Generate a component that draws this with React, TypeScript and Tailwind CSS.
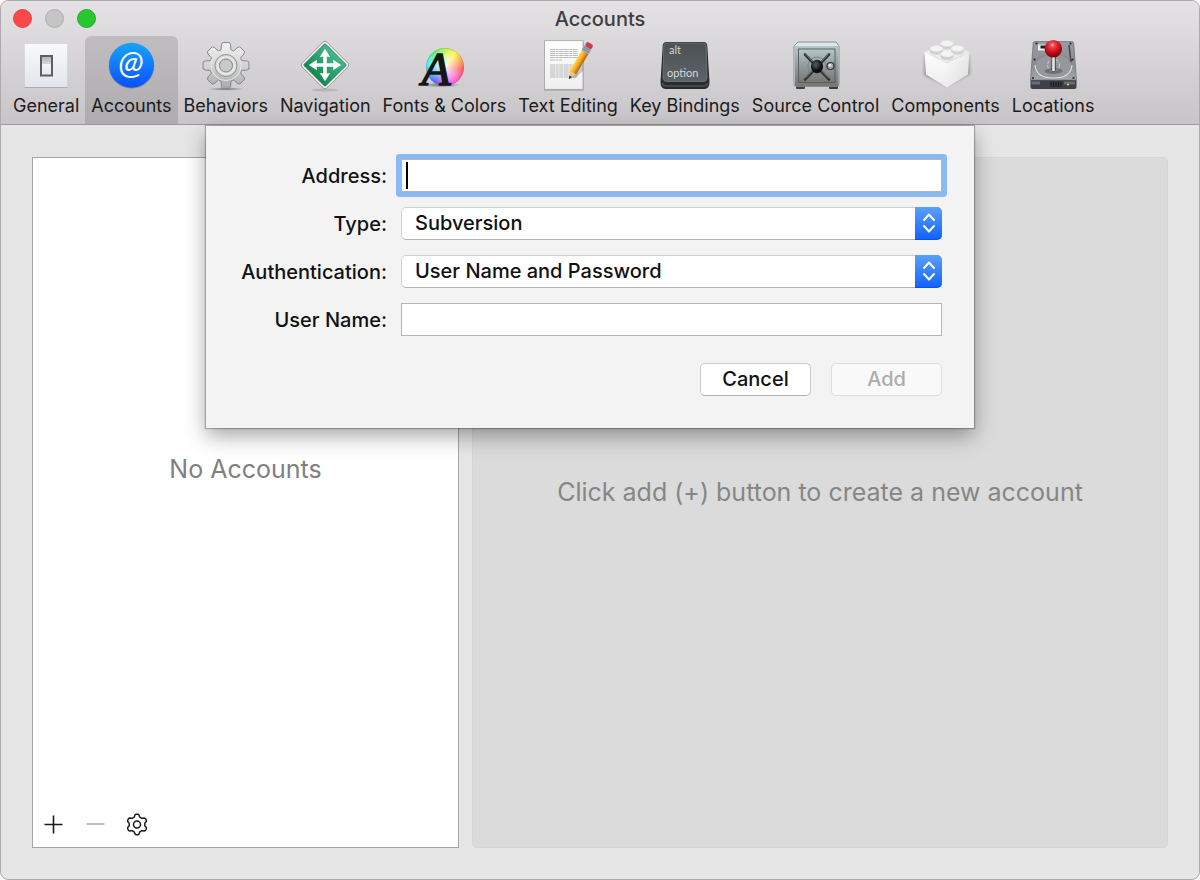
import { useState } from 'react';
import type { ReactNode } from 'react';
import clsx from 'clsx';

const polar = (cx: number, cy: number, r: number, a: number) =>
  `${(cx + r * Math.cos(a)).toFixed(2)} ${(cy + r * Math.sin(a)).toFixed(2)}`;

// Straight-sided cog with eight teeth, first tooth pointing up
const cogPath = (cx: number, cy: number, outer: number, inner: number) => {
  const points: string[] = [];
  for (let i = 0; i < 8; i++) {
    const a = (i * Math.PI) / 4 - Math.PI / 2;
    points.push(
      polar(cx, cy, inner, a - 0.3),
      polar(cx, cy, outer - 2, a - 0.22),
      polar(cx, cy, outer, a - 0.15),
      polar(cx, cy, outer, a + 0.15),
      polar(cx, cy, outer - 2, a + 0.22),
      polar(cx, cy, inner, a + 0.3)
    );
  }
  return `M${points.join('L')}Z`;
};

// Soft six-lobed gear outline
const softGearPath = (cx: number, cy: number) => {
  const points: string[] = [];
  for (let i = 0; i < 90; i++) {
    const a = (i * Math.PI * 2) / 90 - Math.PI / 2;
    const lobe = Math.tanh(2 * Math.cos(6 * (a + Math.PI / 2)));
    points.push(polar(cx, cy, 9 + 1.3 * lobe, a));
  }
  return `M${points.join('L')}Z`;
};

const Icon = ({ children }: { children: ReactNode }) => (
  <svg
    viewBox="0 0 50 50"
    className="h-[50px] w-[50px] shrink-0 overflow-visible"
    aria-hidden="true"
  >
    {children}
  </svg>
);

const GeneralIcon = () => (
  <Icon>
    <defs>
      <linearGradient id="plate" x1="0" y1="0" x2="0" y2="1">
        <stop offset="0" stopColor="#f8f9fb" />
        <stop offset="1" stopColor="#e2e5ea" />
      </linearGradient>
      <linearGradient id="rocker" x1="0" y1="0" x2="0" y2="1">
        <stop offset="0" stopColor="#b4b6ba" />
        <stop offset="0.4" stopColor="#d6d8dc" />
        <stop offset="0.42" stopColor="#f3f4f6" />
        <stop offset="1" stopColor="#e6e8ec" />
      </linearGradient>
    </defs>
    <rect x="3.5" y="4.5" width="43" height="43.5" fill="#a9acb3" />
    <rect x="3.5" y="4" width="43" height="43" fill="url(#plate)" />
    <rect x="19" y="15" width="13" height="21.500" fill="#5c5e62" />
    <rect x="21" y="17" width="9" height="17.500" fill="url(#rocker)" />
  </Icon>
);

const AccountsIcon = () => (
  <Icon>
    <defs>
      <linearGradient id="at" x1="0" y1="0" x2="0" y2="1">
        <stop offset="0" stopColor="#17a4fb" />
        <stop offset="1" stopColor="#0a50fb" />
      </linearGradient>
    </defs>
    <circle cx="25.5" cy="26" r="22.8" fill="#000" opacity="0.2" />
    <circle cx="25.5" cy="25.2" r="22.5" fill="url(#at)" />
    <text
      x="25"
      y="34"
      textAnchor="middle"
      fontSize="33"
      fontStyle="italic"
      fontFamily="Lato, sans-serif"
      fill="#fff"
    >
      @
    </text>
  </Icon>
);

const BehaviorsIcon = () => (
  <Icon>
    <defs>
      <linearGradient id="cog" x1="0" y1="0" x2="0" y2="1">
        <stop offset="0" stopColor="#f4f4f4" />
        <stop offset="0.55" stopColor="#d0d0d0" />
        <stop offset="1" stopColor="#a8a9aa" />
      </linearGradient>
      <radialGradient id="ground">
        <stop offset="0" stopColor="#000" stopOpacity="0.45" />
        <stop offset="1" stopColor="#000" stopOpacity="0" />
      </radialGradient>
    </defs>
    <ellipse cx="25" cy="49" rx="18" ry="1.8" fill="url(#ground)" />
    <path
      d={cogPath(25, 25.5, 23.2, 16.5)}
      fill="url(#cog)"
      stroke="#85888c"
      strokeWidth="1"
      strokeLinejoin="round"
    />
    <circle cx="25" cy="25.5" r="15" fill="none" stroke="#e6e6e6" strokeWidth="1" />
    <circle cx="25" cy="25.5" r="11" fill="#d6d7d7" stroke="#909397" />
    <circle cx="25" cy="25.5" r="8.5" fill="none" stroke="#ededed" strokeWidth="1.5" />
    <circle cx="25" cy="25.5" r="6.5" fill="#c9c9ca" stroke="#85888c" />
  </Icon>
);

const NavigationIcon = () => (
  <Icon>
    <defs>
      <linearGradient id="sign" x1="0" y1="0" x2="0" y2="1">
        <stop offset="0" stopColor="#43b98a" />
        <stop offset="1" stopColor="#168754" />
      </linearGradient>
    </defs>
    <ellipse cx="25" cy="50" rx="13" ry="1.5" fill="#000" opacity="0.12" />
    <rect
      x="7.500"
      y="7.500"
      width="35"
      height="35"
      rx="2.5"
      transform="rotate(45 25 25)"
      fill="#f7f7f7"
      stroke="#858585"
      strokeWidth="0.8"
    />
    <rect
      x="9.800"
      y="9.800"
      width="30.400"
      height="30.400"
      rx="1"
      transform="rotate(45 25 25)"
      fill="url(#sign)"
      stroke="#147149"
      strokeWidth="0.8"
    />
    {[0, 90, 180, 270].map((angle) => (
      <path
        key={angle}
        d="M23.2 26V16.5L19.8 17L25 8.8L30.2 17L26.8 16.5V26Z"
        transform={`rotate(${angle} 25 25)`}
        fill="#fff"
      />
    ))}
  </Icon>
);

const FontsIcon = () => (
  <Icon>
    <ellipse cx="22" cy="45" rx="20" ry="2.500" fill="url(#ground)" />
    <foreignObject x="7" y="8" width="38" height="38">
      <div className="h-[38px] w-[38px] rounded-full bg-[radial-gradient(circle,#ffffffee_0%,#ffffff66_45%,#ffffff00_72%),conic-gradient(#b8f53c,#fff23c_10%,#ff9a3c_19%,#ff4a55_27%,#ff4fc0_38%,#e24bff_47%,#4a55f5_60%,#35a8ff_69%,#3cf0f0_78%,#45ef70_90%,#b8f53c)]" />
    </foreignObject>
    <circle cx="26" cy="27" r="18.6" fill="none" stroke="#777" strokeOpacity="0.3" />
    <text
      x="17"
      y="45"
      textAnchor="middle"
      fontSize="47"
      fontStyle="italic"
      fontFamily="'Liberation Serif', serif"
      fill="#161616"
      stroke="#161616"
      strokeWidth="1.600"
    >
      A
    </text>
  </Icon>
);

const TextEditingIcon = () => (
  <Icon>
    <defs>
      <linearGradient id="sheet" x1="0" y1="0" x2="0" y2="1">
        <stop offset="0" stopColor="#fdfdfd" />
        <stop offset="1" stopColor="#efefef" />
      </linearGradient>
      <linearGradient id="pencil" x1="0" y1="0" x2="1" y2="0">
        <stop offset="0" stopColor="#ffd95e" />
        <stop offset="0.45" stopColor="#f8ae2a" />
        <stop offset="1" stopColor="#b8610c" />
      </linearGradient>
    </defs>
    <rect x="1" y="1.2" width="39.5" height="49.3" fill="#77777a" opacity="0.7" />
    <rect x="1.5" y="0.7" width="38.5" height="48.6" fill="url(#sheet)" stroke="#a8a8aa" strokeWidth="0.8" />
    {[9.5, 11.5, 13.5, 15.5, 17.5, 20, 25, 27, 29, 31, 33, 35, 37].map((y) => (
      <path
        key={y}
        d={`M7 ${y}H${y === 20 ? 19 : 35}`}
        stroke="#b3b3b3"
        strokeWidth="0.9"
        strokeDasharray="5 .6 3 .6 4 .5"
      />
    ))}
    <path d="M26 39L40 24V31L32 38Z" fill="#000" opacity="0.18" />
    <g transform="rotate(31 26 39)">
      <path d="M22.500 31L26 39L29.500 31Z" fill="#edc48d" />
      <path d="M24.6 35.8L26 39.3L27.4 35.8Z" fill="#222" />
      <rect x="22.2" y="7" width="7.6" height="24.5" fill="url(#pencil)" />
      <rect x="22" y="2" width="8" height="6" fill="#9caab3" />
      <path d="M22 4H30M22 6H30" stroke="#6d7a84" strokeWidth="0.7" />
      <rect x="22.2" y="-2.5" width="7.6" height="5" rx="2" fill="#cc4148" />
    </g>
  </Icon>
);

const KeyIcon = () => (
  <Icon>
    <defs>
      <linearGradient id="cap" x1="0" y1="0" x2="0" y2="1">
        <stop offset="0" stopColor="#4c5154" />
        <stop offset="1" stopColor="#5d6366" />
      </linearGradient>
    </defs>
    <path
      d="M6.5 2H43.5Q47 2 47.3 6L49.5 42Q49.5 49 44.5 49H5.500Q.5 49 .5 42L2.700 6Q3 2 6.500 2Z"
      fill="#292c2e"
    />
    <path d="M2 43Q3 46 6 46H44Q47 46 48 43" fill="none" stroke="#4b4f52" strokeWidth="1.5" />
    <path
      d="M7 3H43Q46 3 46.200 6L47 38Q47 41.500 43.500 41.500H6.500Q3 41.500 3 38L3.800 6Q4 3 7 3Z"
      fill="url(#cap)"
      stroke="#73797c"
      strokeWidth="0.8"
    />
    <g fill="#d5d8d9" fontFamily="Lato, sans-serif" fontSize="11">
      <text x="9" y="14">alt</text>
      <text x="7" y="37">option</text>
    </g>
  </Icon>
);

const SafeIcon = () => (
  <Icon>
    <defs>
      <linearGradient id="safe" x1="0" y1="0" x2="0" y2="1">
        <stop offset="0" stopColor="#b4c7c9" />
        <stop offset="0.5" stopColor="#929b9c" />
        <stop offset="1" stopColor="#787673" />
      </linearGradient>
      <radialGradient id="knob" cx="0.4" cy="0.35">
        <stop offset="0" stopColor="#5b5c63" />
        <stop offset="1" stopColor="#0d0d0f" />
      </radialGradient>
    </defs>
    <rect x="5" y="45" width="9" height="4" rx="1" fill="#3e3e3e" />
    <rect x="38" y="45" width="9" height="4" rx="1" fill="#3e3e3e" />
    <path d="M7 2H45L48 6V44Q48 46.500 46 46.500H5Q3 46.500 3 44V6Z" fill="#dce7e8" stroke="#77797a" strokeWidth="0.8" />
    <rect x="4" y="6" width="43.500" height="40" rx="1" fill="url(#safe)" />
    <rect x="7.500" y="9" width="36.500" height="33.500" fill="url(#safe)" stroke="#565c5d" strokeWidth="0.900" />
    <circle cx="26" cy="26" r="9" fill="none" stroke="#7d8687" />
    <path
      d="M14 14.500L38 39.500M38 14.500L14 39.500"
      stroke="#303336"
      strokeWidth="2.600"
      strokeLinecap="round"
    />
    <path d="M14.500 14L38 38.500M37.500 14L14 38.500" stroke="#a5afb0" strokeWidth="0.6" />
    <ellipse cx="26" cy="26.500" rx="6" ry="6.700" fill="url(#knob)" />
    <circle cx="39.500" cy="26" r="3.500" fill="#9fa8a8" stroke="#2d3031" strokeWidth="1.200" />
    <circle cx="39" cy="25.300" r="1.300" fill="#eef2f2" />
  </Icon>
);

const BrickIcon = () => (
  <Icon>
    <defs>
      <linearGradient id="brickLeft" x1="0" y1="0" x2="0" y2="1">
        <stop offset="0" stopColor="#fefefe" />
        <stop offset="1" stopColor="#ececec" />
      </linearGradient>
      <linearGradient id="brickRight" x1="0" y1="0" x2="1" y2="1">
        <stop offset="0" stopColor="#fbfbfb" />
        <stop offset="1" stopColor="#dcdcdc" />
      </linearGradient>
      <filter id="soft">
        <feGaussianBlur stdDeviation="1.5" />
      </filter>
    </defs>
    <path d="M4 14L48 14L49 34L26 46L3 35Z" fill="#000" opacity="0.3" filter="url(#soft)" />
    <path d="M26 3L48.500 12L26 23L3.500 12Z" fill="#ececec" />
    <path d="M3.500 12L26 23V47.500L5 34.500Z" fill="url(#brickLeft)" />
    <path d="M48.500 12L26 23V47.500L47 34.500Z" fill="url(#brickRight)" />
    {[
      [26, 3.5],
      [15.5, 8.5],
      [36.5, 8.5],
      [26, 14]
    ].map(([x, y]) => (
      <g key={`${x}-${y}`}>
        <path
          d={`M${x - 6.5} ${y}V${y + 3}A6.5 3.200 0 0 0 ${x + 6.5} ${y + 3}V${y}Z`}
          fill="#d2d2d2"
        />
        <ellipse cx={x} cy={y} rx="6.500" ry="2.900" fill="#f3f3f3" />
      </g>
    ))}
  </Icon>
);

const LocationsIcon = () => (
  <Icon>
    <defs>
      <linearGradient id="drive" x1="0" y1="0" x2="0" y2="1">
        <stop offset="0" stopColor="#9b9ca0" />
        <stop offset="0.6" stopColor="#8b8c91" />
        <stop offset="1" stopColor="#a6a7ab" />
      </linearGradient>
      <radialGradient id="ball" cx="0.45" cy="0.28" r="0.75">
        <stop offset="0" stopColor="#ffc7c2" />
        <stop offset="0.18" stopColor="#f3414a" />
        <stop offset="0.55" stopColor="#c8101b" />
        <stop offset="1" stopColor="#66040a" />
      </radialGradient>
    </defs>
    <path d="M2.500 40H48.500V47Q48.500 49 46.500 49H4.500Q2.500 49 2.500 47Z" fill="#3f4149" />
    <path d="M7 1.500H43.500Q45.500 1.500 45.700 3L48.500 40H2.500L5.200 3Q5.500 1.500 7 1.500Z" fill="url(#drive)" stroke="#6c6d72" strokeWidth="0.7" />
    <ellipse cx="25.500" cy="26" rx="18.500" ry="12" fill="#96979c" stroke="#808186" strokeWidth="0.8" />
    <path d="M7 25Q8 38 25.500 38T44 25" fill="none" stroke="#e4e4e6" strokeWidth="1.100" />
    <rect x="10" y="4.500" width="9" height="6" fill="#eee" />
    <rect x="12.500" y="5.500" width="6" height="3" fill="#222" />
    <path d="M41 5L43 22" stroke="#4b4c50" strokeWidth="1.600" />
    {[
      [8.5, 3.5],
      [42.5, 3.5],
      [6.5, 19.500],
      [44.5, 19.500],
      [5, 38],
      [45.5, 38]
    ].map(([x, y]) => (
      <circle key={`${x}-${y}`} cx={x} cy={y} r="1.100" fill="#252629" />
    ))}
    <circle cx="25.500" cy="25" r="6" fill="none" stroke="#d2d3d6" strokeDasharray="3 2" />
    <ellipse cx="25.500" cy="31" rx="9" ry="3" fill="#000" opacity="0.25" />
    <rect x="23.300" y="16" width="4.600" height="15.500" rx="1.500" fill="#4d4e52" />
    <rect x="24.200" y="16" width="2.600" height="15" fill="#e8e8ea" />
    <circle cx="25.300" cy="8.800" r="8.800" fill="url(#ball)" />
    <path d="M3.500 43H12M36 43H47" stroke="#686b78" strokeWidth="3" />
    <path d="M23 41.500V47M25.500 41.500V47M28 41.500V47M30.500 41.500V47M33 41.500V47" stroke="#17181b" strokeWidth="1.200" />
    <circle cx="40" cy="44.500" r="1" fill="#e9e43a" />
  </Icon>
);

const TABS = [
  { label: 'General', icon: <GeneralIcon /> },
  { label: 'Accounts', icon: <AccountsIcon /> },
  { label: 'Behaviors', icon: <BehaviorsIcon /> },
  { label: 'Navigation', icon: <NavigationIcon /> },
  { label: 'Fonts & Colors', icon: <FontsIcon /> },
  { label: 'Text Editing', icon: <TextEditingIcon /> },
  { label: 'Key Bindings', icon: <KeyIcon /> },
  { label: 'Source Control', icon: <SafeIcon /> },
  { label: 'Components', icon: <BrickIcon /> },
  { label: 'Locations', icon: <LocationsIcon /> }
];

type SelectProps = { id: string; options: string[] };

const Select = ({ id, options }: SelectProps) => (
  <div className="relative h-[33px]">
    <select
      id={id}
      className="h-full w-full appearance-none rounded-[5px] border border-[#d0d0d0] border-b-[#b3b3b3] bg-white pr-8 pb-[2px] pl-[13px] font-medium text-[#111] outline-none"
    >
      {options.map((option) => (
        <option key={option}>{option}</option>
      ))}
    </select>
    <span className="pointer-events-none absolute inset-y-0 right-0 flex w-[27px] items-center justify-center rounded-r-[5px] border-b border-[#0a50f5] bg-linear-to-b from-[#5a9ff8] to-[#0f62fc]">
      <svg viewBox="0 0 14 20" className="h-5 w-[14px]" aria-hidden="true">
        <path
          d="M2 7L7 1.500L12 7M2 13L7 18.500L12 13"
          fill="none"
          stroke="#fff"
          strokeWidth="2"
          strokeLinecap="round"
          strokeLinejoin="round"
        />
      </svg>
    </span>
  </div>
);

const AccountSheet = () => {
  const [address, setAddress] = useState('');

  return (
    <form
      onSubmit={(event) => event.preventDefault()}
      className="absolute top-px right-[225px] left-[205px] bg-[#f3f3f3] pt-[33px] pr-8 pb-8 text-[20px] font-medium text-[#111] shadow-[0_0_1px_1px_rgba(0,0,0,0.25),0_8px_20px_rgba(0,0,0,0.35)]"
    >
      <div className="grid grid-cols-[181px_1fr] items-center gap-x-[14px] gap-y-[15px]">
        <label htmlFor="address" className="text-right">
          Address:
        </label>
        <div className="relative">
          <input
            id="address"
            value={address}
            onChange={(event) => setAddress(event.target.value)}
            className="block h-[33px] w-full rounded-[1px] border border-[#b5b5b5] bg-white px-[5px] caret-transparent ring-[5px] ring-[#8bb9f6] outline-none"
          />
          {!address && (
            <span className="pointer-events-none absolute top-[3px] left-[5px] h-[27px] w-[2px] bg-black" />
          )}
        </div>

        <label htmlFor="type" className="text-right">
          Type:
        </label>
        <Select id="type" options={['Subversion']} />

        <label htmlFor="authentication" className="text-right">
          Authentication:
        </label>
        <Select id="authentication" options={['User Name and Password']} />

        <label htmlFor="username" className="text-right">
          User Name:
        </label>
        <input
          id="username"
          className="h-[33px] w-full border border-[#b5b5b5] bg-white px-[5px] outline-none"
        />
      </div>

      <div className="mt-[27px] flex justify-end gap-5">
        <button
          type="button"
          className="h-[33px] w-[111px] rounded-[5px] border border-[#cccccc] border-b-[#b0b0b0] bg-white pb-[2px]"
        >
          Cancel
        </button>
        <button
          type="submit"
          disabled
          className="h-[33px] w-[111px] rounded-[5px] border border-[#dedede] bg-[#f9f9f9] pb-[2px] text-[#adadad]"
        >
          Add
        </button>
      </div>
    </form>
  );
};

function App() {
  const [activeTab, setActiveTab] = useState('Accounts');

  return (
    <div className="flex min-h-screen flex-col overflow-hidden rounded-[8px] border border-[#ababab] bg-[#e6e6e6] font-[Inter,sans-serif]">
      <header className="flex flex-col border-b border-[#9b999b] bg-linear-to-b from-[#e4e2e4] to-[#c8c5c8]">
        <div className="grid h-[35px] grid-cols-[1fr_auto_1fr] items-center px-3">
          <div className="flex gap-[13px]">
            <button aria-label="Close" className="h-[19px] w-[19px] rounded-full border border-[#e8403f] bg-[#fc4848]" />
            <button aria-label="Minimize" className="h-[19px] w-[19px] rounded-full border border-[#aeacae] bg-[#c6c5c6]" />
            <button aria-label="Zoom" className="h-[19px] w-[19px] rounded-full border border-[#25a72c] bg-[#28c732]" />
          </div>
          <h1 className="text-[20px] font-medium text-[#3f3e3f]">Accounts</h1>
        </div>

        <nav className="flex px-[6px]">
          {TABS.map(({ label, icon }) => (
            <button
              key={label}
              onClick={() => setActiveTab(label)}
              className={clsx(
                'flex h-[88px] flex-col items-center rounded-t-[6px] px-[6px] pt-1 text-[18px] leading-8 whitespace-nowrap text-[#1c1b1c]',
                activeTab === label && 'bg-linear-to-b from-[#bfbdbf] to-[#aeacae]'
              )}
            >
              {icon}
              {label}
            </button>
          ))}
        </nav>
      </header>

      <main className="relative flex flex-1 gap-[13px] p-[31px] pt-8">
        <section className="flex w-[427px] shrink-0 flex-col border border-[#a5a5a5] bg-white">
          <p className="flex flex-1 items-center justify-center pb-5 text-[25px] text-[#808080]">
            No Accounts
          </p>
          <div className="flex h-[46px] items-center gap-[18px] px-2">
            <button aria-label="Add account">
              <svg viewBox="0 0 24 24" className="h-6 w-6" aria-hidden="true">
                <path d="M12.500 3.500V21.500M3.500 12.500H21.500" stroke="#1a1a1a" strokeWidth="1.600" />
              </svg>
            </button>
            <button aria-label="Remove account" disabled>
              <svg viewBox="0 0 24 24" className="h-6 w-6" aria-hidden="true">
                <path d="M3.500 12H21.500" stroke="#a8a8a8" strokeWidth="1.500" />
              </svg>
            </button>
            <button aria-label="Account options">
              <svg viewBox="0 0 24 24" className="h-6 w-6" aria-hidden="true">
                <path
                  d={softGearPath(12, 12.5)}
                  fill="none"
                  stroke="#1a1a1a"
                  strokeWidth="1.500"
                  strokeLinejoin="round"
                />
                <circle cx="12" cy="12.500" r="3.500" fill="none" stroke="#1a1a1a" strokeWidth="1.500" />
              </svg>
            </button>
          </div>
        </section>

        <section className="flex flex-1 items-center justify-center rounded-[5px] border border-[#d5d5d5] bg-[#dbdbdb] pb-5 text-[25px] text-[#868686]">
          <p>Click add (+) button to create a new account</p>
        </section>

        <AccountSheet />
      </main>
    </div>
  );
}

export default App;
